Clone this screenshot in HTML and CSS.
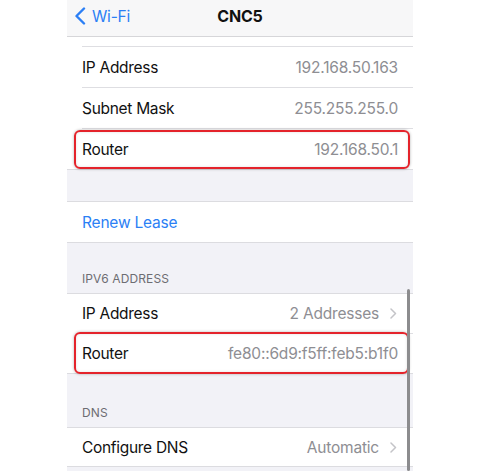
FILE: index.html
```html
<!DOCTYPE html>
<html>
<head>
<meta charset="utf-8">
<link rel="stylesheet" href="styles.css">
</head>
<body>
<div class="screen">
  <header class="nav">
    <div class="back">
      <svg class="back-chev" width="12" height="18" viewBox="0 0 12 18"><path d="M10 1.5 L2.5 9 L10 16.5" fill="none" stroke="#2b7ff5" stroke-width="2.4" stroke-linecap="round" stroke-linejoin="round"/></svg>
      <span>Wi-Fi</span>
    </div>
    <div class="title">CNC5</div>
    <div></div>
  </header>

  <div class="group first">
    <div class="stub"></div>
    <div class="sep"></div>
    <div class="row"><span class="label">IP Address</span><span class="value">192.168.50.163</span></div>
    <div class="sep"></div>
    <div class="row"><span class="label">Subnet Mask</span><span class="value">255.255.255.0</span></div>
    <div class="sep"></div>
    <div class="row"><span class="label">Router</span><span class="value">192.168.50.1</span><span class="hl"></span></div>
  </div>

  <div class="gap gap-a"></div>

  <div class="group">
    <div class="row"><span class="link">Renew Lease</span></div>
  </div>

  <div class="gap gap-b"><span class="header">IPV6 ADDRESS</span></div>

  <div class="group tight">
    <div class="row"><span class="label">IP Address</span><span class="value">2 Addresses</span>
      <svg class="chev" width="7" height="11" viewBox="0 0 7 11"><path d="M1 1 L5.5 5.5 L1 10" fill="none" stroke="#c4c4c8" stroke-width="1.5" stroke-linecap="round" stroke-linejoin="round"/></svg>
    </div>
    <div class="sep"></div>
    <div class="row"><span class="label">Router</span><span class="value">fe80::6d9:f5ff:feb5:b1f0</span><span class="hl up"></span></div>
  </div>

  <div class="gap gap-c"><span class="header">DNS</span></div>

  <div class="group short">
    <div class="row"><span class="label">Configure DNS</span><span class="value">Automatic</span>
      <svg class="chev" width="7" height="11" viewBox="0 0 7 11"><path d="M1 1 L5.5 5.5 L1 10" fill="none" stroke="#c4c4c8" stroke-width="1.5" stroke-linecap="round" stroke-linejoin="round"/></svg>
    </div>
  </div>

  <div class="gap"></div>

  <div class="scrollbar"></div>
</div>
</body>
</html>
```

FILE: styles.css
```css
* { box-sizing: border-box; }

html, body {
  margin: 0;
  padding: 0;
  background: #ffffff;
}

body {
  font-family: "Inter", "Liberation Sans", sans-serif;
  width: 488px;
  height: 471px;
  overflow: hidden;
}

.screen {
  position: relative;
  width: 346px;
  height: 471px;
  margin-left: 67px;
  background: #f2f2f7;
  overflow: hidden;
}

.nav {
  height: 37px;
  background: #f7f7f8;
  border-bottom: 1px solid #d6d6d9;
  display: grid;
  grid-template-columns: 1fr auto 1fr;
  align-items: center;
  padding-bottom: 4px;
}

.back {
  display: flex;
  align-items: center;
  gap: 6px;
  padding-left: 7px;
  color: #2b7ff5;
  font-size: 15.5px;
  letter-spacing: -0.2px;
}

.back-chev { display: block; }

.title {
  font-weight: 700;
  font-size: 16px;
  color: #111;
  letter-spacing: -0.2px;
}

.group {
  background: #ffffff;
  border-bottom: 1px solid #dcdce0;
}

.gap + .group {
  border-top: 1px solid #dcdce0;
}

.stub { height: 9px; }

.sep {
  height: 1px;
  margin-left: 15px;
  background: #dedee2;
}

.row {
  position: relative;
  height: 40px;
  display: flex;
  align-items: center;
  padding: 0 15px;
  font-size: 15.5px;
}

.tight .row { height: 39px; }
.short .row { height: 38px; }

.label {
  color: #111111;
  flex: 1;
  letter-spacing: -0.3px;
}

.value {
  color: #8e8e93;
  letter-spacing: -0.2px;
}

.link {
  color: #2b7ff5;
  letter-spacing: -0.2px;
}

.chev {
  display: block;
  margin-left: 11px;
  margin-right: 1px;
}

.gap {
  display: flex;
  align-items: flex-end;
  padding: 0 15px 6px;
}

.gap-a { height: 31px; }
.gap-b { height: 50px; }
.gap-c { height: 53px; }

.header {
  font-size: 12px;
  line-height: 16px;
  color: #6d6d72;
  letter-spacing: 0.1px;
}

.hl {
  position: absolute;
  left: 7px;
  right: 3px;
  top: 1px;
  bottom: 0;
  border: 2px solid #e4232b;
  border-radius: 6px;
  box-shadow: 0 0 3px rgba(0, 0, 0, 0.3), inset 0 0 3px rgba(0, 0, 0, 0.12);
}

.hl.up {
  top: -2px;
  bottom: -1px;
  right: 4px;
}

.scrollbar {
  position: absolute;
  left: 340px;
  top: 289px;
  bottom: 0;
  width: 3px;
  border-radius: 2px;
  background: #8c8c8e;
}
```
